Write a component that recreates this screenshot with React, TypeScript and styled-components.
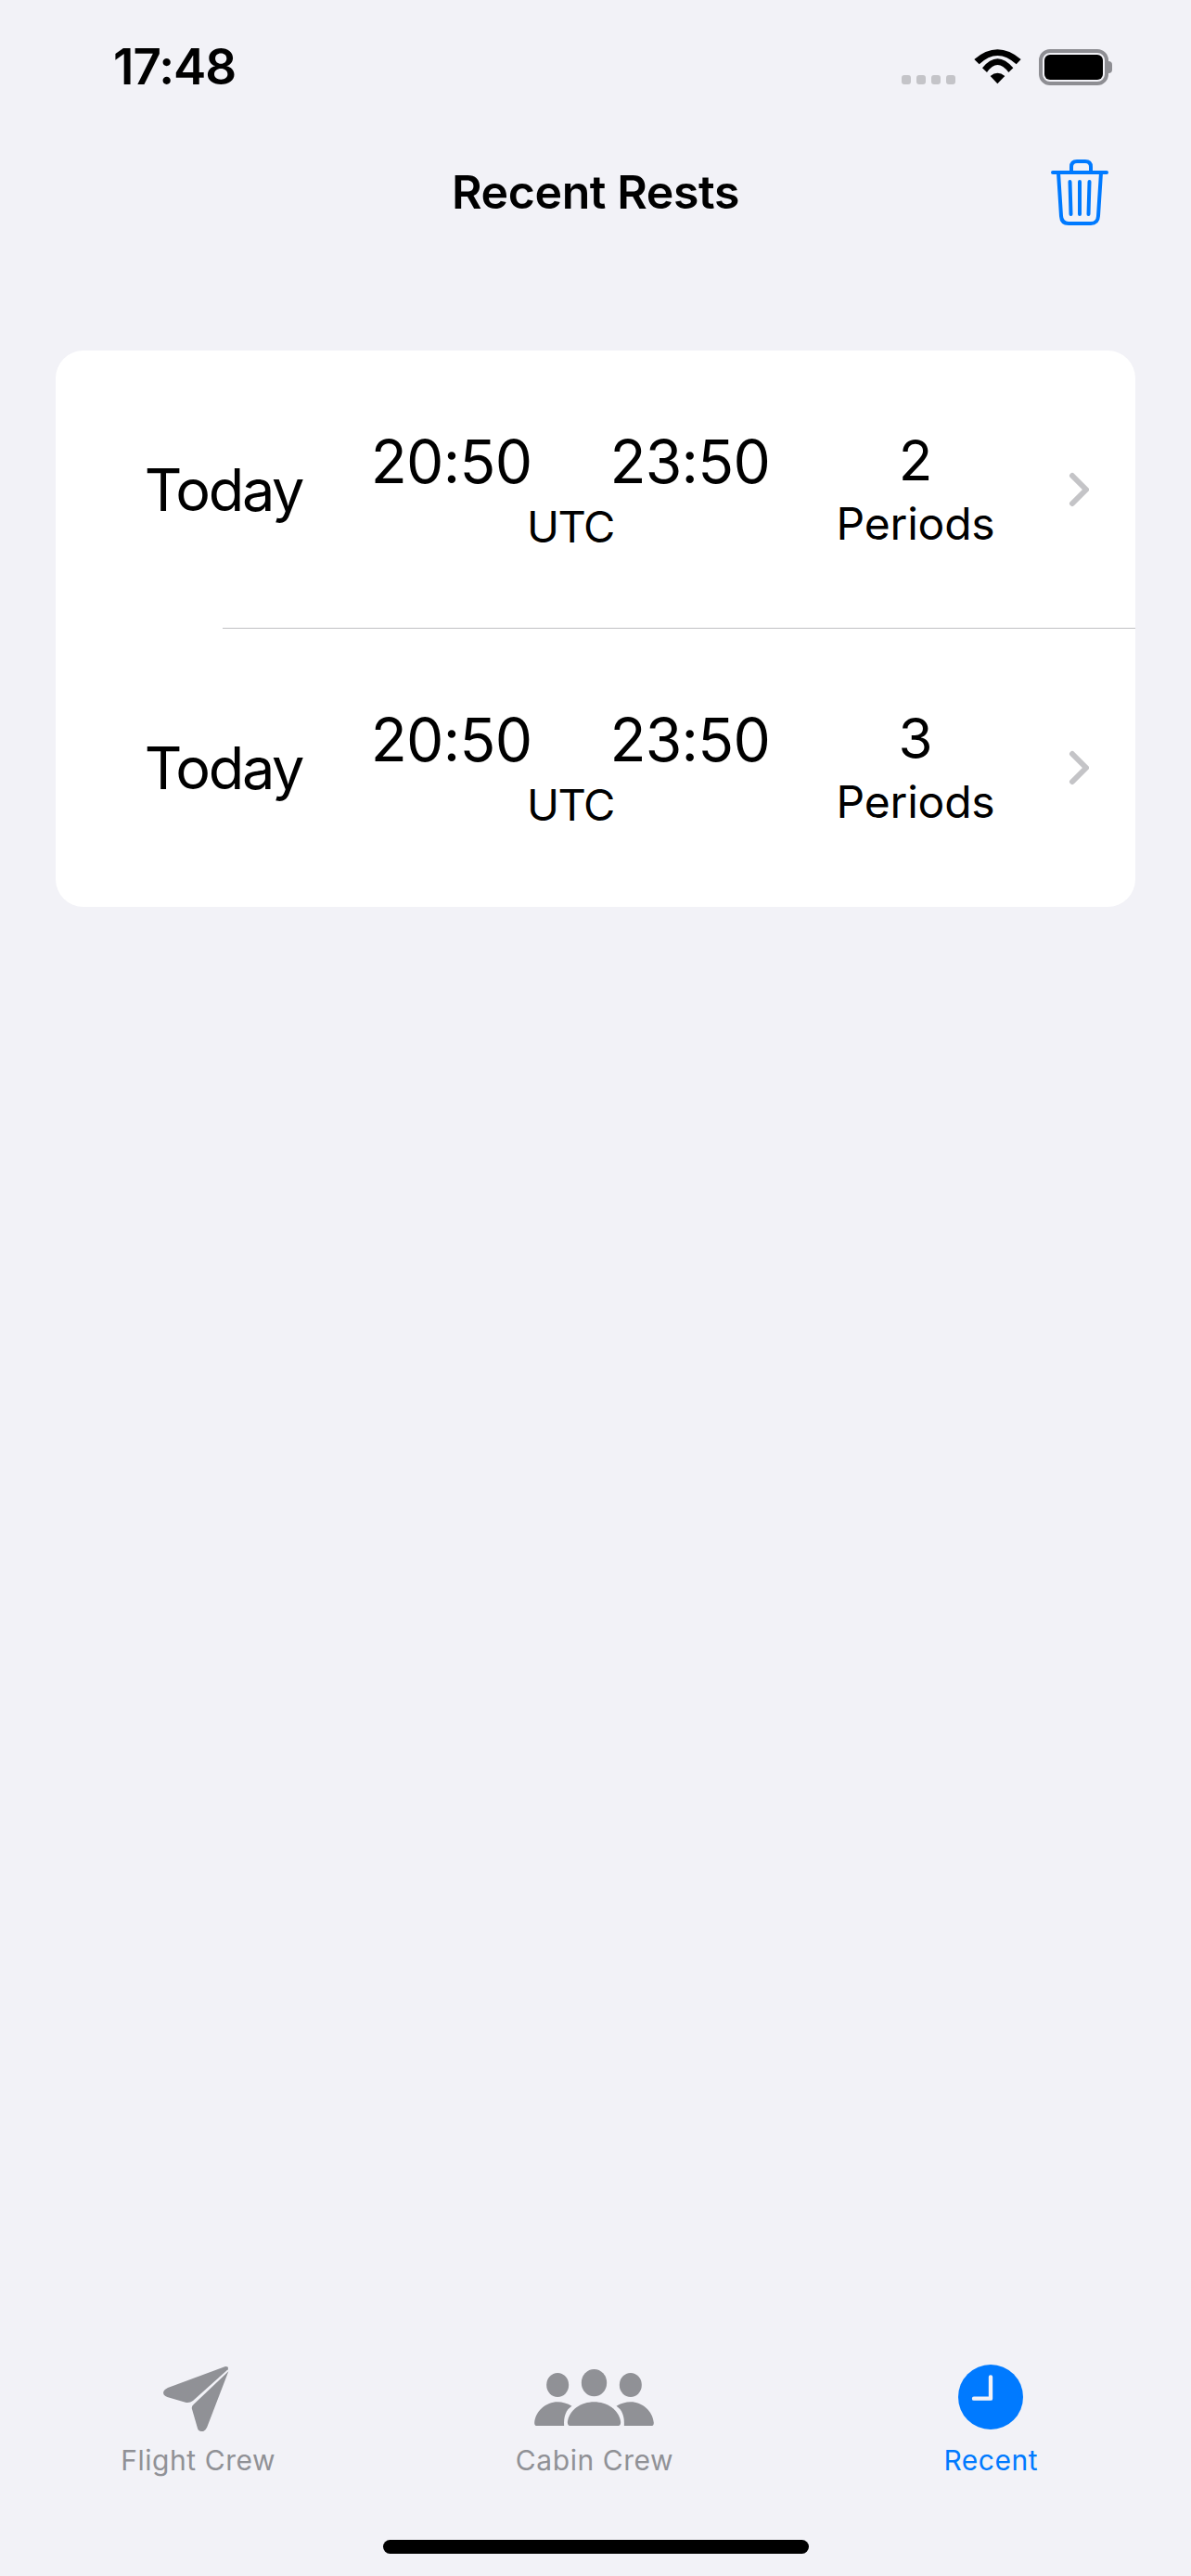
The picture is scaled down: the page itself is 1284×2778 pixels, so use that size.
import React from 'react';
import styled, { createGlobalStyle } from 'styled-components';

const BLUE = '#007aff';
const GRAY = '#909196';

const GlobalStyle = createGlobalStyle`
    html, body {
        margin: 0;
        padding: 0;
        background: #f2f2f7;
        font-family: 'Inter', 'Liberation Sans', sans-serif;
        color: #000;
    }
`;

const Page = styled.div`
    width: 1284px;
    height: 2778px;
    display: flex;
    flex-direction: column;
    background: #f2f2f7;
    overflow: hidden;
`;

const StatusBar = styled.div`
    height: 106px;
    display: flex;
    align-items: flex-start;
    justify-content: space-between;
    padding: 0 89px 0 122px;
    box-sizing: border-box;
`;

const Clock = styled.div`
    margin-top: 44px;
    font-size: 53px;
    line-height: 56px;
    font-weight: 600;
    letter-spacing: -1px;
`;

const StatusIcons = styled.div`
    display: flex;
    align-items: flex-start;
    margin-top: 53px;
`;

const Signal = styled.div`
    display: flex;
    gap: 6px;
    margin: 28px 20px 0 0;
`;

const SignalDot = styled.span`
    width: 10px;
    height: 10px;
    border-radius: 3px;
    background: #c4c4c8;
`;

const Battery = styled.div`
    position: relative;
    width: 75px;
    height: 39px;
    margin-left: 19px;
    padding: 2px;
    box-sizing: border-box;
    border: 4px solid #8e8e93;
    border-radius: 12px;

    &::after {
        content: '';
        position: absolute;
        left: 71px;
        top: 9px;
        width: 4px;
        height: 13px;
        background: #8e8e93;
        border-radius: 0 5px 5px 0;
    }
`;

const BatteryFill = styled.div`
    width: 100%;
    height: 100%;
    background: #000;
    border-radius: 6px;
`;

const NavBar = styled.div`
    position: relative;
    height: 168px;
    display: flex;
    justify-content: center;
    padding-top: 76px;
    box-sizing: border-box;
`;

const Title = styled.div`
    font-size: 50px;
    line-height: 50px;
    font-weight: 600;
    letter-spacing: -0.4px;
`;

const TrashButton = styled.div`
    position: absolute;
    left: 1133px;
    top: 66px;
    width: 62px;
    height: 71px;
`;

const Card = styled.div`
    margin: 104px 60px 0;
    padding-bottom: 1px;
    background: #fff;
    border-radius: 30px;
    overflow: hidden;
`;

const Row = styled.div`
    height: 299px;
    display: flex;
    align-items: center;
`;

const Divider = styled.div`
    height: 1px;
    margin-left: 180px;
    background: #c0c0c3;
`;

const Day = styled.div`
    width: 362px;
    text-align: center;
    font-size: 63px;
    letter-spacing: -2.3px;
    line-height: 70px;
`;

const Times = styled.div`
    width: 386px;
    display: flex;
    flex-direction: column;
    align-items: center;
    margin-top: 1px;
`;

const TimePair = styled.div`
    display: flex;
    justify-content: center;
    gap: 84px;
    font-size: 64px;
    line-height: 70px;
    letter-spacing: -0.7px;
`;

const Zone = styled.div`
    margin-top: 9px;
    font-size: 47px;
    line-height: 52px;
    letter-spacing: -1.4px;
`;

const Periods = styled.div`
    width: 300px;
    margin-left: 29px;
    margin-top: 1px;
    display: flex;
    flex-direction: column;
    align-items: center;
`;

const Count = styled.div`
    font-size: 60px;
    line-height: 66px;
`;

const PeriodsLabel = styled.div`
    margin-top: 8px;
    font-size: 48px;
    line-height: 56px;
    letter-spacing: -0.2px;
`;

const Chevron = styled.svg`
    width: 24px;
    height: 38px;
    margin-left: 13px;
`;

const TabBar = styled.div`
    margin-top: auto;
    display: flex;
    padding-right: 2px;
`;

const Tab = styled.div<{ $active?: boolean }>`
    flex: 1;
    display: flex;
    flex-direction: column;
    align-items: center;
    color: ${p => (p.$active ? BLUE : GRAY)};
`;

const TabIcon = styled.div`
    height: 76px;
    display: flex;
    align-items: center;
    justify-content: center;
`;

const PlaneIcon = styled.svg`
    width: 72px;
    height: 72px;
    margin: 3px 5px 0 0;
`;

const TabLabel = styled.div`
    margin-top: 12px;
    font-size: 30px;
    line-height: 36px;
    font-weight: 400;
    letter-spacing: 0.55px;
`;

const HomeArea = styled.div`
    height: 107px;
    display: flex;
    justify-content: center;
    align-items: flex-end;
    padding-bottom: 24px;
    box-sizing: border-box;
`;

const HomeIndicator = styled.div`
    width: 459px;
    height: 15px;
    border-radius: 8px;
    background: #000;
`;

const rests = [{ id: 1, periods: 2 }, { id: 2, periods: 3 }];

const Wifi = () => (
    <svg width="51" height="38" viewBox="330 42 153 112">
        <path d="M331 74Q406 10 482 74L467 90Q406 34 347 90Z" fill="#000" />
        <path d="M357 102Q406 42 457 102L442 116Q406 68 372 116Z" fill="#000" />
        <path d="M383 128Q406 108 430 128L406 153Z" fill="#000" />
    </svg>
);

const Trash = () => (
    <svg width="62" height="71" viewBox="0 0 62 71" fill="none" stroke={BLUE} strokeWidth="4" strokeLinecap="round">
        <path d="M2 14H60" />
        <path d="M22 14V8Q22 2 28 2H37Q43 2 43 8V14" />
        <path d="M8 14L11 61Q11.500 69 19 69H43Q50.500 69 51 61L54 14" />
        <path d="M20.500 24L21.500 59M31 24V59M41.500 24L40.500 59" />
    </svg>
);

const Plane = () => (
    <PlaneIcon viewBox="226 93 218 218" fill="currentColor">
        <path d="M432 96Q444 96 440 106L326 208Q316 216 304 214L242 196Q226 190 230 178Q232 172 244 166Z" />
        <path d="M442 112L372 294Q364 310 352 308Q342 306 340 294L322 232Q322 224 328 220Z" />
    </PlaneIcon>
);

const People = () => (
    <svg width="129" height="61" viewBox="168 105 386 183" fill="currentColor">
        <ellipse cx="243" cy="156" rx="36" ry="39" />
        <ellipse cx="361" cy="149" rx="41" ry="44" />
        <ellipse cx="479" cy="156" rx="36" ry="39" />
        <path d="M283 288Q275 288 275 276C280 236 320 211 361 211C402 211 442 236 447 276Q447 288 439 288Z" />
        <path d="M176 288Q168 288 168 278C172 240 205 211 243 211C258 211 275 216 289 224C270 236 262 258 264 288Z" />
        <path d="M546 288Q554 288 554 278C550 240 517 211 479 211C464 211 447 216 433 224C452 236 460 258 458 288Z" />
    </svg>
);

const RecentClock = () => (
    <svg width="70" height="70" viewBox="161 90 210 210">
        <circle cx="266" cy="195" r="105" fill={BLUE} />
        <path d="M266 130V200H212" fill="none" stroke="#f2f2f7" strokeWidth="13" strokeLinecap="round" strokeLinejoin="round" />
    </svg>
);

export default function App() {
    return (
        <Page>
            <GlobalStyle />
            <StatusBar>
                <Clock>17:48</Clock>
                <StatusIcons>
                    <Signal>
                        <SignalDot />
                        <SignalDot />
                        <SignalDot />
                        <SignalDot />
                    </Signal>
                    <Wifi />
                    <Battery>
                        <BatteryFill />
                    </Battery>
                </StatusIcons>
            </StatusBar>
            <NavBar>
                <Title>Recent Rests</Title>
                <TrashButton>
                    <Trash />
                </TrashButton>
            </NavBar>
            <Card>
                {rests.map((rest, index) => (
                    <React.Fragment key={rest.id}>
                        {index > 0 && <Divider />}
                        <Row>
                            <Day>Today</Day>
                            <Times>
                                <TimePair>
                                    <span>20:50</span>
                                    <span>23:50</span>
                                </TimePair>
                                <Zone>UTC</Zone>
                            </Times>
                            <Periods>
                                <Count>{rest.periods}</Count>
                                <PeriodsLabel>Periods</PeriodsLabel>
                            </Periods>
                            <Chevron viewBox="0 0 24 38" fill="none" stroke="#c4c4c7" strokeWidth="6" strokeLinecap="round" strokeLinejoin="round">
                                <path d="M6 4L21 19L6 34" />
                            </Chevron>
                        </Row>
                    </React.Fragment>
                ))}
            </Card>
            <TabBar>
                <Tab>
                    <TabIcon>
                        <Plane />
                    </TabIcon>
                    <TabLabel>Flight Crew</TabLabel>
                </Tab>
                <Tab>
                    <TabIcon>
                        <People />
                    </TabIcon>
                    <TabLabel>Cabin Crew</TabLabel>
                </Tab>
                <Tab $active>
                    <TabIcon>
                        <RecentClock />
                    </TabIcon>
                    <TabLabel>Recent</TabLabel>
                </Tab>
            </TabBar>
            <HomeArea>
                <HomeIndicator />
            </HomeArea>
        </Page>
    );
}
